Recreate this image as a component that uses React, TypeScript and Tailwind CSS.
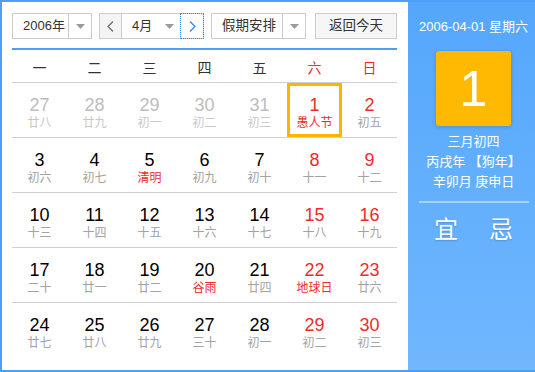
import React from 'react';

type Day = { d: number; lunar: string; muted?: boolean; fest?: boolean; selected?: boolean };

const rows: Day[][] = [
  [
    { d: 27, lunar: '廿八', muted: true },
    { d: 28, lunar: '廿九', muted: true },
    { d: 29, lunar: '初一', muted: true },
    { d: 30, lunar: '初二', muted: true },
    { d: 31, lunar: '初三', muted: true },
    { d: 1, lunar: '愚人节', fest: true, selected: true },
    { d: 2, lunar: '初五' },
  ],
  [
    { d: 3, lunar: '初六' },
    { d: 4, lunar: '初七' },
    { d: 5, lunar: '清明', fest: true },
    { d: 6, lunar: '初九' },
    { d: 7, lunar: '初十' },
    { d: 8, lunar: '十一' },
    { d: 9, lunar: '十二' },
  ],
  [
    { d: 10, lunar: '十三' },
    { d: 11, lunar: '十四' },
    { d: 12, lunar: '十五' },
    { d: 13, lunar: '十六' },
    { d: 14, lunar: '十七' },
    { d: 15, lunar: '十八' },
    { d: 16, lunar: '十九' },
  ],
  [
    { d: 17, lunar: '二十' },
    { d: 18, lunar: '廿一' },
    { d: 19, lunar: '廿二' },
    { d: 20, lunar: '谷雨', fest: true },
    { d: 21, lunar: '廿四' },
    { d: 22, lunar: '地球日', fest: true },
    { d: 23, lunar: '廿六' },
  ],
  [
    { d: 24, lunar: '廿七' },
    { d: 25, lunar: '廿八' },
    { d: 26, lunar: '廿九' },
    { d: 27, lunar: '三十' },
    { d: 28, lunar: '初一' },
    { d: 29, lunar: '初二' },
    { d: 30, lunar: '初三' },
  ],
];

const weekdays = ['一', '二', '三', '四', '五', '六', '日'];

const Caret = () => (
  <svg width="9" height="5" viewBox="0 0 9 5">
    <path d="M0 0h9L4.5 5z" fill="#9a9a9a" />
  </svg>
);

const Chevron = ({ dir, color }: { dir: 'l' | 'r'; color: string }) => (
  <svg width="7" height="11" viewBox="0 0 7 11">
    <path
      d={dir === 'l' ? 'M6 0.5L1 5.5L6 10.5' : 'M1 0.5L6 5.5L1 10.5'}
      fill="none"
      stroke={color}
      strokeWidth="1.2"
    />
  </svg>
);

const DayCell: React.FC<{ day: Day; col: number }> = ({ day, col }) => {
  const weekend = col >= 5;
  let numColor = 'text-black';
  if (day.muted) numColor = 'text-[#bdbdbd]';
  else if (weekend) numColor = 'text-[#ee2b2b]';
  let lunarColor = 'text-[#a3a3a3]';
  if (day.muted) lunarColor = 'text-[#c8c8c8]';
  else if (day.fest) lunarColor = 'text-[#ee2b2b]';

  return (
    <div
      className={
        'w-[55px] h-[54px] flex flex-col items-center ' +
        (day.selected ? 'border-[3px] border-[#ffb400] pt-[9px]' : 'pt-[12px]')
      }
    >
      <div className={'text-[18px] leading-[20px] ' + numColor}>{day.d}</div>
      <div className={'text-[12px] leading-[16px] ' + lunarColor}>{day.lunar}</div>
    </div>
  );
};

export default function App() {
  return (
    <div
      className="w-[535px] h-[372px] flex border-l-2 border-t-2 border-b-2 border-[#4c9ef6] overflow-hidden"
      style={{ fontFamily: '"Liberation Sans", "Noto Sans CJK SC", sans-serif' }}
    >
      {/* left: calendar */}
      <div className="w-[406px] bg-white px-[10px] pt-[11px]">
        <div className="flex h-[26px] text-[#333]">
          <div className="w-[80px] flex border border-[#cccccc] bg-white">
            <div className="w-[55px] pl-[10px] flex items-center text-[13px]">2006年</div>
            <div className="flex-1 border-l border-[#cccccc] flex items-center justify-center">
              <Caret />
            </div>
          </div>
          <div className="ml-[7px] w-[105px] flex border border-[#cccccc] bg-white">
            <div className="w-[22px] bg-[#f4f4f4] border-r border-[#cccccc] flex items-center justify-center">
              <Chevron dir="l" color="#666" />
            </div>
            <div className="flex-1 pl-[10px] pr-[6px] flex items-center justify-between text-[13px]">
              <span>4月</span>
              <Caret />
            </div>
            <div className="w-[24px] -my-px -mr-px border border-dotted border-[#2f86f0] flex items-center justify-center">
              <Chevron dir="r" color="#2f86f0" />
            </div>
          </div>
          <div className="ml-[7px] w-[95px] flex border border-[#cccccc] bg-white">
            <div className="w-[70px] pl-[10px] flex items-center text-[13.5px]">假期安排</div>
            <div className="flex-1 border-l border-[#cccccc] flex items-center justify-center">
              <Caret />
            </div>
          </div>
          <div className="ml-[9px] w-[82px] border border-[#cccccc] bg-[#f6f6f6] flex items-center justify-center text-[13.5px]">
            返回今天
          </div>
        </div>

        <div className="mt-[9px] w-[385px] border-t-2 border-[#4c9ef6]">
          <div className="h-[33px] pt-[4px] flex items-center border-b border-[#cfcfcf] text-[14px]">
            {weekdays.map((w, i) => (
              <div
                key={w}
                className={'w-[55px] text-center ' + (i >= 5 ? 'text-[#ee2b2b]' : 'text-[#333]')}
              >
                {w}
              </div>
            ))}
          </div>
          {rows.map((r, ri) => (
            <div
              key={ri}
              className={'flex h-[55px] ' + (ri < rows.length - 1 ? 'border-b border-[#cfcfcf]' : '')}
            >
              {r.map((d, ci) => (
                <DayCell key={ci} day={d} col={ci} />
              ))}
            </div>
          ))}
        </div>
      </div>

      {/* right: detail panel */}
      <div className="flex-1 bg-gradient-to-b from-[#54a7fc] to-[#70b7fe] pl-[4px] pt-[15px] flex flex-col items-center text-white">
        <div className="text-[13px] leading-[20px]">2006-04-01 星期六</div>
        <div className="mt-[14px] w-[75px] h-[75px] rounded-[3px] bg-[#ffb900] shadow-[0_1px_4px_rgba(0,0,0,0.18)] flex items-center justify-center text-[50px] leading-none">
          1
        </div>
        <div className="mt-[6px] text-[13px] leading-[20px] text-center">
          <div>三月初四</div>
          <div>丙戌年 【狗年】</div>
          <div>辛卯月 庚申日</div>
        </div>
        <div className="mt-[9px] w-[110px] h-[2px] bg-white/45" />
        <div className="mt-[12px] flex gap-[31px] text-[24px] leading-[30px] [text-shadow:0_1px_2px_rgba(0,0,0,0.2)]">
          <span>宜</span>
          <span>忌</span>
        </div>
      </div>
    </div>
  );
}
